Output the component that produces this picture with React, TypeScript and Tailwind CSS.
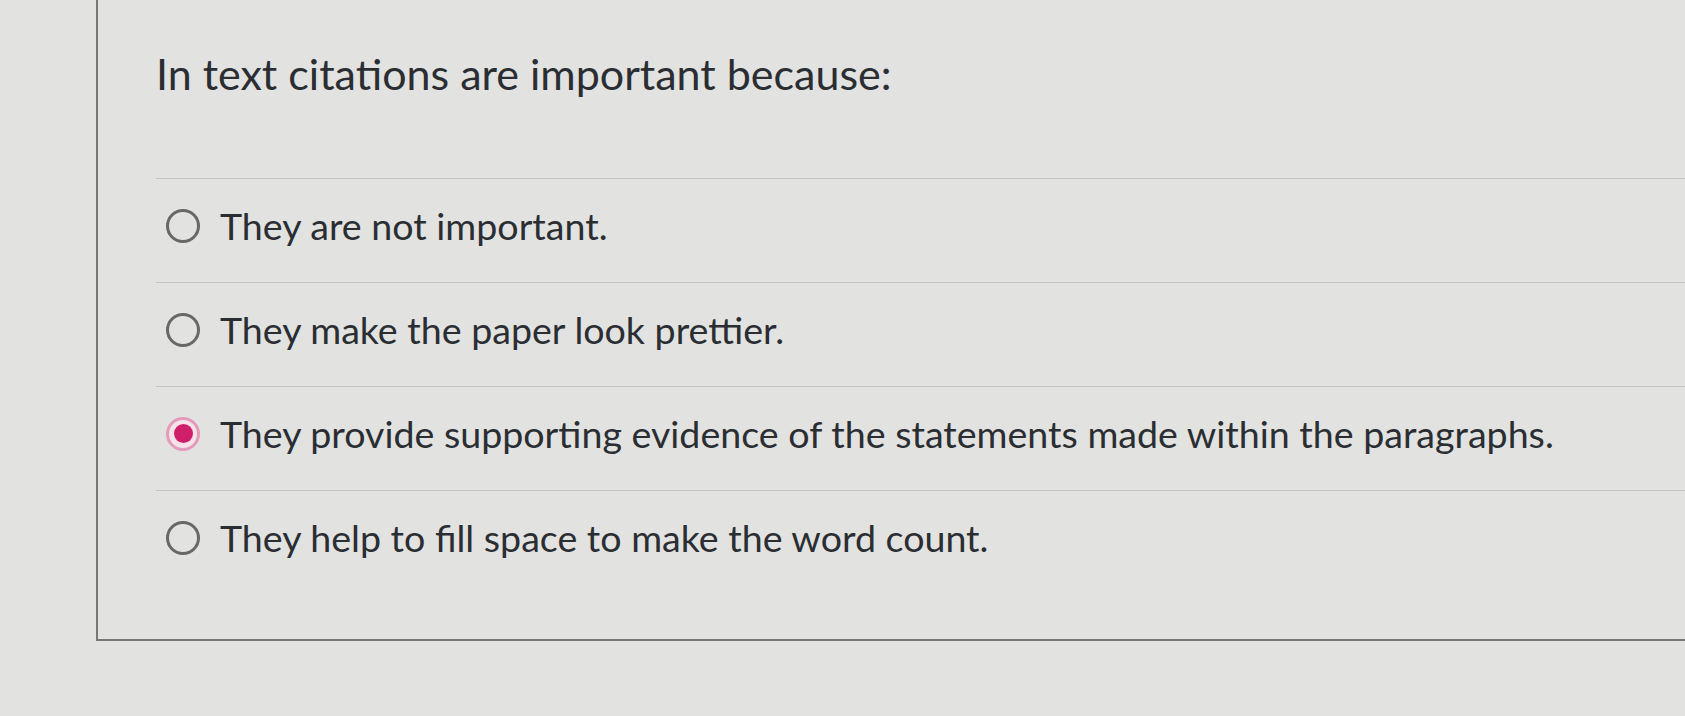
import React, { useState } from 'react';

interface Option {
  id: number;
  label: string;
}

const options: Option[] = [
  { id: 1, label: 'They are not important.' },
  { id: 2, label: 'They make the paper look prettier.' },
  { id: 3, label: 'They provide supporting evidence of the statements made within the paragraphs.' },
  { id: 4, label: 'They help to fill space to make the word count.' },
];

const Radio: React.FC<{ checked: boolean }> = ({ checked }) =>
  checked ? (
    <span className="size-[34px] shrink-0 rounded-full border-[3px] border-[#e39bbb] bg-[#f6e3ea] flex items-center justify-center">
      <span className="size-[19px] rounded-full bg-[#d01f6a]"></span>
    </span>
  ) : (
    <span className="size-[34px] shrink-0 rounded-full border-[3px] border-[#686868]"></span>
  );

const App: React.FC = () => {
  const [selected, setSelected] = useState(3);

  return (
    <div
      className="h-[716px] w-full overflow-hidden bg-[#e2e2e0] pl-[96px] text-[#2a2e33]"
      style={{ fontFamily: 'Lato, "Open Sans", sans-serif' }}
    >
      {/* Question card */}
      <div className="h-[641px] border-l-2 border-b-2 border-[#777777] pl-[58px]">
        <h1 className="pt-[52px] text-[43px] leading-none font-normal">In text citations are important because:</h1>

        <div className="mt-[83px] flex flex-col">
          {options.map((opt) => (
            <label
              key={opt.id}
              onClick={() => setSelected(opt.id)}
              className="h-[104px] flex items-start pt-[28px] border-t border-[#c4c4c2] cursor-pointer"
            >
              <div className="flex items-center">
                <span className="ml-[10px] mr-[20px] flex">
                  <Radio checked={selected === opt.id} />
                </span>
                <span className="text-[37.6px] leading-none">{opt.label}</span>
              </div>
            </label>
          ))}
        </div>
      </div>
    </div>
  );
};

export default App;
